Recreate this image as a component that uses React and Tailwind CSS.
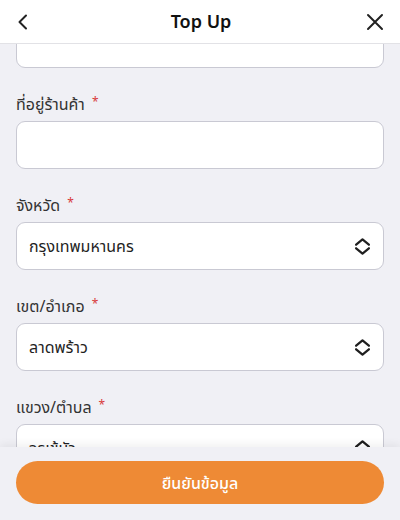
import React from "react";

const font = { fontFamily: '"Noto Sans", "Noto Sans Thai", "Liberation Sans", sans-serif' };

function UpDown() {
  return (
    <svg width="17" height="17" viewBox="0 0 16 16" fill="none" stroke="#1f1f1f" strokeWidth="2.1" strokeLinecap="round" strokeLinejoin="round">
      <path d="M2 6.3 L8 1.3 L14 6.3" />
      <path d="M2 9.7 L8 14.7 L14 9.7" />
    </svg>
  );
}

function Label({ children }) {
  return (
    <div className="h-[24px] leading-[24px] mb-[5px] text-[16px] text-[#333] flex items-center">
      <span>{children}</span>
      <span className="text-[#d83a3a] text-[12px] ml-[7px] -mt-[5px]">*</span>
    </div>
  );
}

function Input() {
  return <div className="h-[48px] rounded-[9px] border border-[#c9c9d3] bg-white" />;
}

function Select({ value }) {
  return (
    <div className="h-[48px] rounded-[9px] border border-[#c9c9d3] bg-white flex items-center justify-between pl-[12px] pr-[12px]">
      <span className="text-[16px] text-[#1f1f1f]">{value}</span>
      <UpDown />
    </div>
  );
}

export default function App() {
  return (
    <div className="w-[400px] h-[520px] bg-[#f0f0f5] flex flex-col overflow-hidden" style={font}>
      <div className="h-[44px] bg-white border-b border-[#e2e2e6] flex items-center justify-between px-[16px] shrink-0">
        <svg width="14" height="16" viewBox="0 0 14 16" fill="none" stroke="#222" strokeWidth="2" strokeLinecap="round" strokeLinejoin="round">
          <path d="M10 1.5 L3.5 8 L10 14.5" />
        </svg>
        <div className="text-[18px] font-semibold text-[#111] ml-[6px]">Top Up</div>
        <svg width="18" height="18" viewBox="0 0 18 18" fill="none" stroke="#222" strokeWidth="2" strokeLinecap="round">
          <path d="M2 2 L16 16 M16 2 L2 16" />
        </svg>
      </div>
      <div className="flex-1 overflow-hidden">
        <div className="px-[16px] -mt-[24px] flex flex-col gap-[24px]">
          <Input />
          <div>
            <Label>ที่อยู่ร้านค้า</Label>
            <Input />
          </div>
          <div>
            <Label>จังหวัด</Label>
            <Select value="กรุงเทพมหานคร" />
          </div>
          <div>
            <Label>เขต/อำเภอ</Label>
            <Select value="ลาดพร้าว" />
          </div>
          <div>
            <Label>แขวง/ตำบล</Label>
            <Select value="จรเข้บัว" />
          </div>
        </div>
      </div>
      <div className="h-[73px] shrink-0 bg-[#f0f0f5] shadow-[0_-3px_8px_rgba(0,0,0,0.06)] px-[16px] pt-[14px]">
        <button className="w-full h-[43px] rounded-full bg-[#ee8a35] text-white text-[16px] font-medium">
          ยืนยันข้อมูล
        </button>
      </div>
    </div>
  );
}
